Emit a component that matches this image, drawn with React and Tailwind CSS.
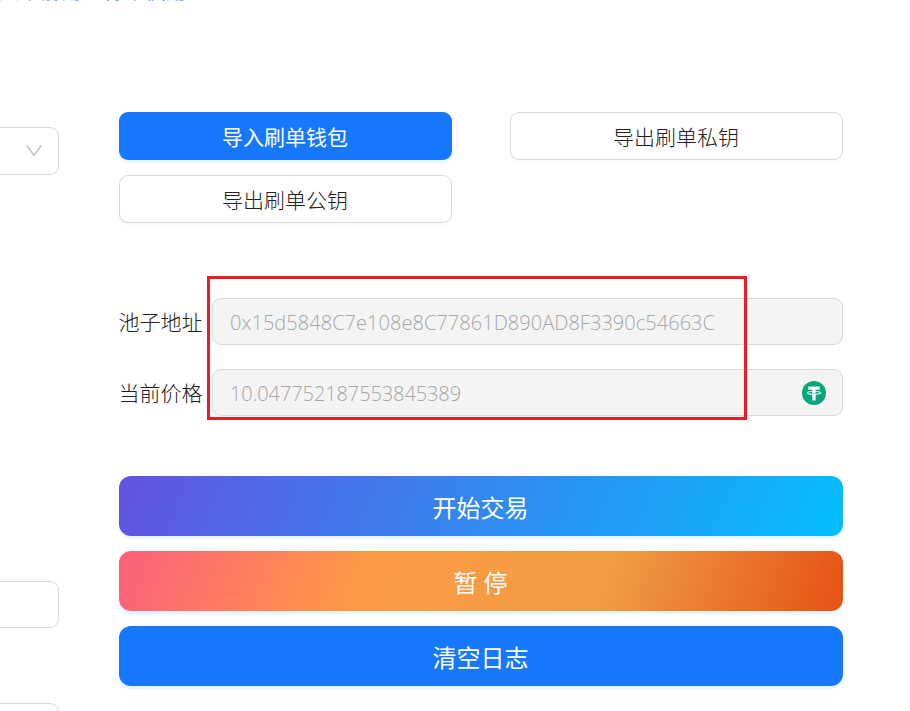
function TetherIcon() {
  return (
    <svg className="mt-px" width="24" height="24" viewBox="0 0 32 32" aria-hidden="true">
      <circle cx="16" cy="16" r="16" fill="#08a67c" />
      <path
        fill="#fff"
        stroke="#fff"
        strokeWidth=".5"
        d="M17.92 17.38v-.002c-.11.008-.677.042-1.942.042-1.01 0-1.721-.03-1.971-.042v.003c-3.888-.171-6.79-.848-6.79-1.658 0-.809 2.902-1.486 6.79-1.66v2.644c.254.018.982.061 1.988.061 1.207 0 1.812-.05 1.925-.06v-2.643c3.88.173 6.775.85 6.775 1.658 0 .81-2.895 1.485-6.775 1.657m0-3.59v-2.366h5.414V7.819H8.595v3.608h5.414v2.365c-4.4.202-7.709 1.074-7.709 2.118s3.309 1.915 7.709 2.118v7.582h3.913v-7.584c4.393-.202 7.694-1.073 7.694-2.116s-3.301-1.914-7.694-2.117"
      />
    </svg>
  );
}

function ExportButton({ children }) {
  return (
    <button className="h-12 rounded-[9px] border border-[#d9d9d9] bg-white pt-[3px] pr-px text-[21px] text-[#202020] shadow-[0_3px_0_rgba(0,0,0,0.02)]">
      {children}
    </button>
  );
}

function Field({ label, value, tracking, icon }) {
  return (
    <label className="flex h-[47px] items-center justify-between text-[21px] text-[#202020]">
      <span className="-ml-[0.4px] pt-0.5 whitespace-nowrap">{label}</span>
      <span className="flex h-full w-[631px] items-center justify-between rounded-[9px] border border-[#d9d9d9] bg-[#f4f4f4] pr-4 pl-[17px]">
        <span className={"pt-0.5 text-[20px] whitespace-nowrap text-[#a6a6a6] " + tracking}>{value}</span>
        {icon}
      </span>
    </label>
  );
}

const action =
  "h-[60px] w-full rounded-xl pt-[3px] pr-px text-[24px] leading-none text-white shadow-[0_3px_0_rgba(5,145,255,0.1)]";

export default function App() {
  return (
    <div className="relative flex h-[711px] w-[910px] overflow-hidden border-r border-[#f3f3f3] bg-white font-['Open_Sans','Noto_Sans_CJK_SC',sans-serif] font-light">
      <a className="absolute -top-[25px] left-[-2px] text-[21px] leading-[30px] font-normal whitespace-nowrap text-[#1677ff]">
        天不前角进行不使用
      </a>
      <aside className="flex w-[59px] shrink-0 flex-col pt-[127px]">
        <div className="flex h-12 shrink-0 items-center justify-end rounded-r-[9px] border border-l-0 border-[#d9d9d9] pr-4">
          <svg width="16" height="16" viewBox="0 0 16 16" fill="none" stroke="#bdbdbd" strokeWidth="1.3">
            <path d="M.8 2.5 8 12.5l7.2-10" />
          </svg>
        </div>
        <div className="mt-[406px] h-[47px] shrink-0 rounded-r-[9px] border border-l-0 border-[#d9d9d9]" />
        <div className="mt-[75px] h-[47px] shrink-0 rounded-r-[9px] border border-l-0 border-[#d9d9d9]" />
      </aside>
      <main className="ml-[60px] w-[724px] pt-28">
        <div className="grid grid-cols-[333px_333px] justify-between gap-y-[15px]">
          <button className="h-12 rounded-[9px] bg-[#1677ff] pt-[3px] pr-px text-[21px] font-normal text-white shadow-[0_3px_0_rgba(5,145,255,0.1)]">
            导入刷单钱包
          </button>
          <ExportButton>导出刷单私钥</ExportButton>
          <ExportButton>导出刷单公钥</ExportButton>
        </div>
        <section className="mt-[75px] flex flex-col gap-6">
          <Field label="池子地址" value="0x15d5848C7e108e8C77861D890AD8F3390c54663C" tracking="tracking-[0.04px]" />
          <Field label="当前价格" value="10.047752187553845389" tracking="tracking-[-0.1px]" icon={<TetherIcon />} />
        </section>
        <div className="mt-[60px] flex flex-col gap-[15px]">
          <button className={action + " bg-[linear-gradient(113deg,#6253e1,#04befe)] font-normal"}>开始交易</button>
          <button className={action + " bg-[linear-gradient(110deg,#fd6279_0%,#fd6279_2%,#ff9a44_34%,#ef9d43_67%,#e75516_98%)] font-normal"}>
            暂 停
          </button>
          <button className={action + " bg-[#1677ff] font-normal"}>清空日志</button>
        </div>
      </main>
      <div className="pointer-events-none absolute top-[276px] left-[207px] h-36 w-[540px] border-3 border-[#ed1c24]" />
    </div>
  );
}
